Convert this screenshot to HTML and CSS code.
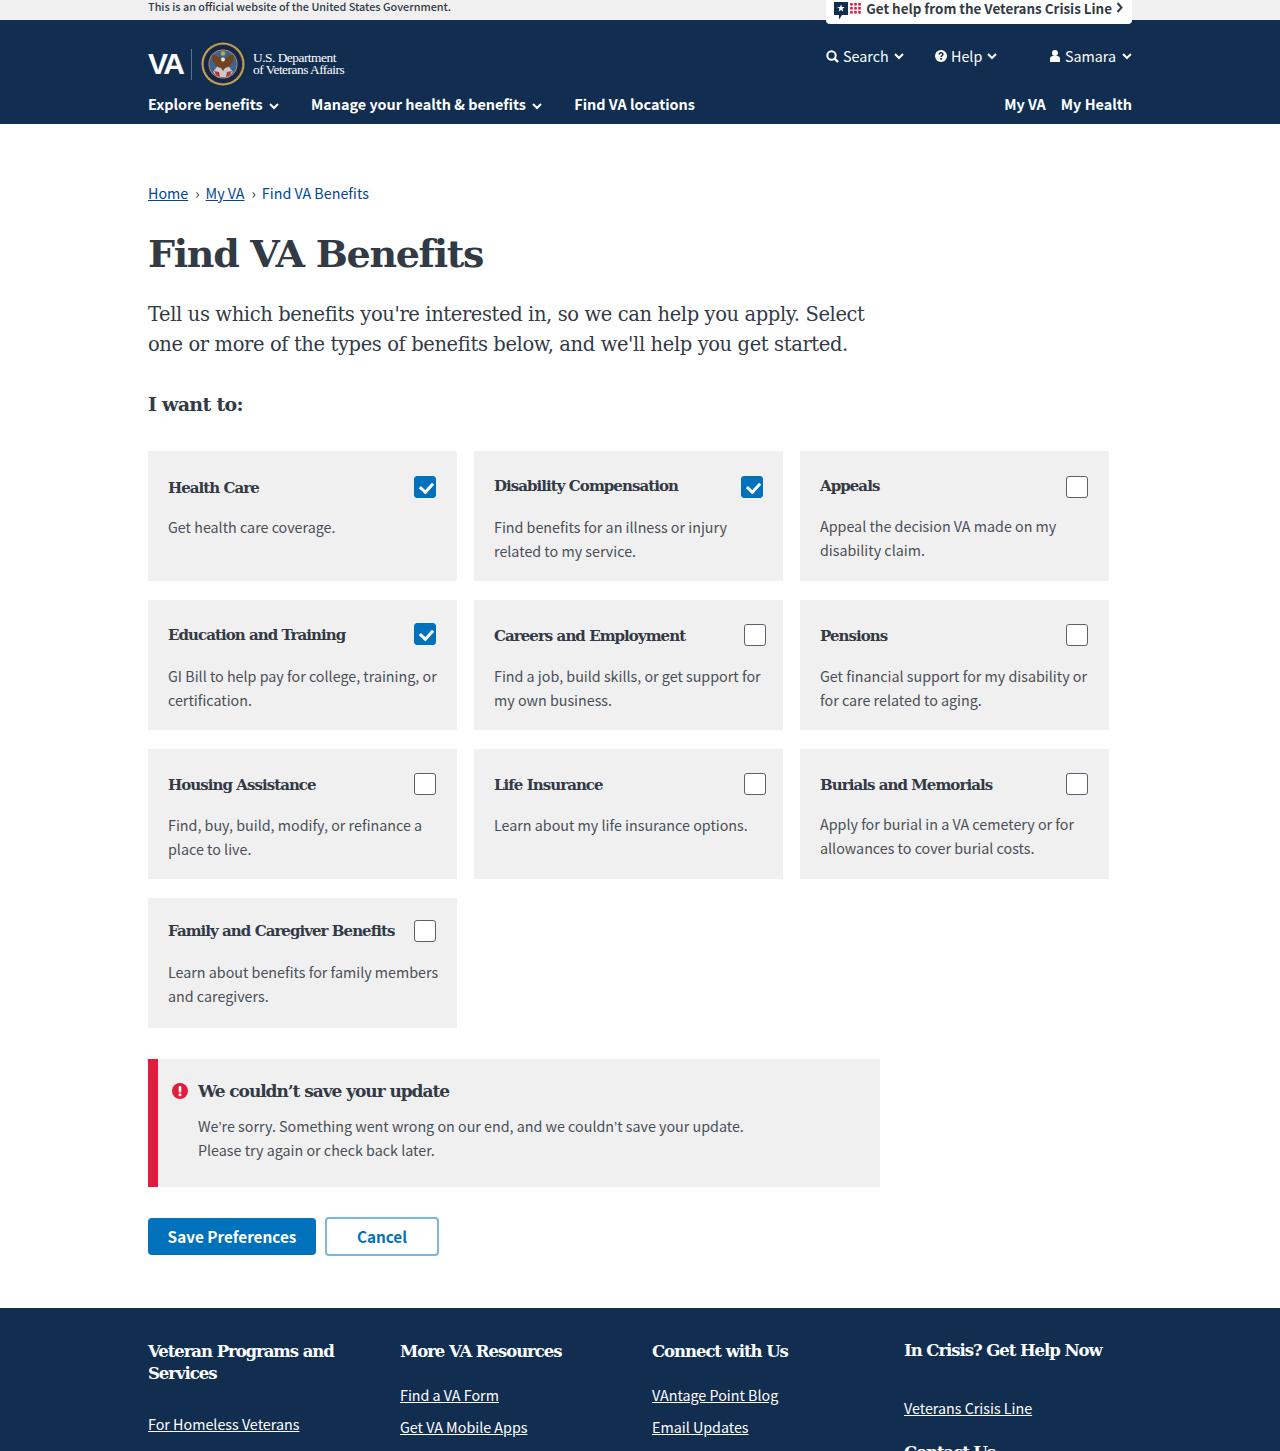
FILE: index.html
```html
<!DOCTYPE html>
<html lang="en">

<head>
  <meta charset="UTF-8">
  <title>Find VA Benefits</title>
  <link rel="stylesheet" href="styles.css">
</head>

<body>
  <div class="official-bar">
    <div class="wrap official-inner">
      <span class="official-text">This is an official website of the United States Government.</span>
      <a class="crisis-tab" href="#">
        <svg class="crisis-icon" width="29" height="21" viewBox="0 0 29 21">
          <path d="M0 2h14v13H8l-3 4.500V15H0z" fill="#112e51" />
          <path d="M7 4.500l1 2.600h2.700l-2.200 1.700.8 2.700L7 9.900l-2.300 1.600.8-2.700-2.200-1.700h2.700z" fill="#fff" />
          <g fill="#e31c3d">
            <rect x="16.200" y="3" width="2.600" height="2.600" /><rect x="20.200" y="3" width="2.600" height="2.600" /><rect x="24.200" y="3" width="2.600" height="2.600" />
            <rect x="16.200" y="7" width="2.600" height="2.600" /><rect x="20.200" y="7" width="2.600" height="2.600" /><rect x="24.200" y="7" width="2.600" height="2.600" />
            <rect x="16.200" y="11" width="2.600" height="2.600" /><rect x="20.200" y="11" width="2.600" height="2.600" /><rect x="24.200" y="11" width="2.600" height="2.600" />
          </g>
        </svg>
        Get help from the Veterans Crisis Line
        <svg class="crisis-arrow" width="7" height="11" viewBox="0 0 7 11"><path d="M1.500 1l4 4.500-4 4.500" fill="none" stroke="#323a45" stroke-width="2" /></svg>
      </a>
    </div>
  </div>

  <header class="site-header">
    <div class="wrap">
      <div class="header-top">
        <a class="logo" href="#">
          <span class="logo-va">VA</span>
          <span class="logo-rule"></span>
          <svg class="logo-seal" width="44" height="44" viewBox="0 0 44 44">
            <circle cx="22" cy="22" r="21.500" fill="#c9a24a" />
            <circle cx="22" cy="22" r="19.500" fill="#16264a" />
            <circle cx="22" cy="22" r="19.500" fill="none" stroke="#8f8a6a" stroke-width="1" stroke-dasharray="1.500 1.500" />
            <circle cx="22" cy="22" r="14.500" fill="#c9a24a" />
            <circle cx="22" cy="22" r="13.800" fill="#3d648f" />
            <path d="M12 30l6-8 4 6 4-6 6 8-5 5h-10z" fill="#c7c9cf" />
            <path d="M13 29l5 1 1 5-3-1zM31 29l-5 1-1 5 3-1z" fill="#b5303c" />
            <path d="M22 21c-2-6-6-8-11-8 0 6 3 12 9 13l2 3 2-3c6-1 9-7 9-13-5 0-9 2-11 8z" fill="#74431f" />
            <path d="M20.500 29l1.500 5 1.500-5z" fill="#d9c9a0" />
            <circle cx="22" cy="17.500" r="2" fill="#efe9d8" />
            <circle cx="22" cy="11.500" r="2.300" fill="#c9a24a" />
          </svg>
          <span class="logo-text">U.S. Department<br>of Veterans Affairs</span>
        </a>
        <div class="util-nav">
          <a class="util-item util-search" href="#">
            <svg width="13" height="13" viewBox="0 0 13 13"><circle cx="5.500" cy="5.500" r="4.200" fill="none" stroke="#fff" stroke-width="2" /><path d="M8.500 8.500l3.500 3.500" stroke="#fff" stroke-width="2.400" /></svg>
            Search
            <svg class="caret" width="10" height="7" viewBox="0 0 10 7"><path d="M1 1l4 4 4-4" fill="none" stroke="#fff" stroke-width="2" /></svg>
          </a>
          <a class="util-item util-help" href="#">
            <svg width="12" height="12" viewBox="0 0 12 12"><circle cx="6" cy="6" r="6" fill="#fff" /><path d="M4.200 4.500c0-2.300 3.700-2.300 3.700-.2 0 1.300-1.800 1.300-1.800 2.700" fill="none" stroke="#112e51" stroke-width="1.500" /><rect x="5.200" y="8" width="1.700" height="1.700" fill="#112e51" /></svg>
            Help
            <svg class="caret" width="10" height="7" viewBox="0 0 10 7"><path d="M1 1l4 4 4-4" fill="none" stroke="#fff" stroke-width="2" /></svg>
          </a>
          <a class="util-item util-user" href="#">
            <svg width="10" height="12" viewBox="0 0 10 12"><circle cx="5" cy="3" r="3" fill="#fff" /><path d="M0 12V8.500C0 7 1.500 6 2.500 6h5C8.500 6 10 7 10 8.500V12z" fill="#fff" /></svg>
            Samara
            <svg class="caret" width="10" height="7" viewBox="0 0 10 7"><path d="M1 1l4 4 4-4" fill="none" stroke="#fff" stroke-width="2" /></svg>
          </a>
        </div>
      </div>
      <nav class="main-nav">
        <a class="nav-link nav-explore" href="#">Explore benefits <svg class="caret" width="10" height="7" viewBox="0 0 10 7"><path d="M1 1l4 4 4-4" fill="none" stroke="#fff" stroke-width="2" /></svg></a>
        <a class="nav-link nav-manage" href="#">Manage your health &amp; benefits <svg class="caret" width="10" height="7" viewBox="0 0 10 7"><path d="M1 1l4 4 4-4" fill="none" stroke="#fff" stroke-width="2" /></svg></a>
        <a class="nav-link" href="#">Find VA locations</a>
        <span class="nav-spacer"></span>
        <a class="nav-link nav-myva" href="#">My VA</a>
        <a class="nav-link" href="#">My Health</a>
      </nav>
    </div>
  </header>

  <main class="wrap page">
    <div class="breadcrumbs">
      <a href="#">Home</a><span class="crumb-sep">›</span><a href="#">My VA</a><span class="crumb-sep">›</span><span class="crumb-current">Find VA Benefits</span>
    </div>

    <h1 class="page-title">Find VA Benefits</h1>
    <p class="intro">Tell us which benefits you're interested in, so we can help you apply. Select<br>one or more of the types of benefits below, and we'll help you get started.</p>
    <h2 class="want-title">I want to:</h2>

    <div class="benefits">
      <div class="card">
        <div class="card-head"><h3 class="title-down">Health Care</h3><span class="box checked"></span></div>
        <p>Get health care coverage.</p>
      </div>
      <div class="card">
        <div class="card-head"><h3 class="title-up">Disability Compensation</h3><span class="box checked box-tight"></span></div>
        <p>Find benefits for an illness or injury related to my service.</p>
      </div>
      <div class="card card-tight">
        <div class="card-head"><h3 class="title-up">Appeals</h3><span class="box"></span></div>
        <p>Appeal the decision VA made on my disability claim.</p>
      </div>
      <div class="card card-edu">
        <div class="card-head"><h3>Education and Training</h3><span class="box checked box-up"></span></div>
        <p>GI Bill to help pay for college, training, or certification.</p>
      </div>
      <div class="card">
        <div class="card-head"><h3>Careers and Employment</h3><span class="box box-out box-up"></span></div>
        <p>Find a job, build skills, or get support for my own business.</p>
      </div>
      <div class="card">
        <div class="card-head"><h3>Pensions</h3><span class="box box-up"></span></div>
        <p>Get financial support for my disability or for care related to aging.</p>
      </div>
      <div class="card">
        <div class="card-head"><h3>Housing Assistance</h3><span class="box box-up"></span></div>
        <p>Find, buy, build, modify, or refinance a place to live.</p>
      </div>
      <div class="card">
        <div class="card-head"><h3>Life Insurance</h3><span class="box box-out box-up"></span></div>
        <p>Learn about my life insurance options.</p>
      </div>
      <div class="card card-tight">
        <div class="card-head"><h3>Burials and Memorials</h3><span class="box box-up"></span></div>
        <p>Apply for burial in a VA cemetery or for allowances to cover burial costs.</p>
      </div>
      <div class="card card-family">
        <div class="card-head"><h3>Family and Caregiver Benefits</h3><span class="box"></span></div>
        <p>Learn about benefits for family members and caregivers.</p>
      </div>
    </div>

    <div class="alert">
      <svg class="alert-icon" width="16" height="16" viewBox="0 0 16 16"><circle cx="8" cy="8" r="8" fill="#e31c3d" /><rect x="6.700" y="3" width="2.600" height="6.500" rx="1" fill="#fff" /><circle cx="8" cy="11.800" r="1.500" fill="#fff" /></svg>
      <div>
        <h3>We couldn’t save your update</h3>
        <p>We<span class="apos">’</span>re sorry. Something went wrong on our end, and we couldn<span class="apos">’</span>t save your update.<br>Please try again or check back later.</p>
      </div>
    </div>

    <div class="actions">
      <a class="btn btn-primary" href="#">Save Preferences</a>
      <a class="btn btn-outline" href="#">Cancel</a>
    </div>
  </main>

  <footer class="site-footer">
    <div class="wrap footer-cols">
      <div class="footer-col">
        <h4 class="footer-two-line">Veteran Programs and Services</h4>
        <a href="#">For Homeless Veterans</a>
      </div>
      <div class="footer-col">
        <h4>More VA Resources</h4>
        <a href="#">Find a VA Form</a>
        <a href="#">Get VA Mobile Apps</a>
      </div>
      <div class="footer-col">
        <h4>Connect with Us</h4>
        <a href="#">VAntage Point Blog</a>
        <a href="#">Email Updates</a>
      </div>
      <div class="footer-col footer-crisis">
        <h4>In Crisis? Get Help Now</h4>
        <a href="#">Veterans Crisis Line</a>
        <h4 class="footer-contact">Contact Us</h4>
      </div>
    </div>
  </footer>
</body>

</html>
```

FILE: styles.css
```css
* {
  box-sizing: border-box;
}

html,
body {
  height: 1451px;
  overflow: hidden;
}

body {
  margin: 0;
  font-family: "Noto Sans CJK SC", sans-serif;
  font-size: 14.300px;
  color: #323a45;
  background-color: #fff;
}

a {
  text-decoration: none;
}

.wrap {
  width: 984px;
  margin: 0 auto;
}

/* top bar */
.official-bar {
  height: 20px;
  background-color: #f0f0f0;
}

.official-inner {
  display: flex;
  justify-content: space-between;
}

.official-text {
  font-size: 10.850px;
  font-weight: 500;
  line-height: 12px;
}

.crisis-tab {
  display: flex;
  align-items: center;
  height: 24px;
  padding: 0 9px 9px 8px;
  position: relative;
  z-index: 1;
  border-radius: 0 0 4px 4px;
  font-size: 13.400px;
  font-weight: 700;
  color: #323a45;
  background-color: #fff;
}

.crisis-icon {
  margin-right: 3px;
  align-self: flex-start;
}

.crisis-arrow {
  margin-left: 4px;
}

/* header */
.site-header {
  height: 104px;
  color: #fff;
  background-color: #112e51;
}

.site-header a {
  color: #fff;
}

.header-top {
  display: flex;
  justify-content: space-between;
  height: 69px;
}

.logo {
  display: flex;
  align-items: center;
  height: 44px;
  margin-top: 22px;
}

.logo-va {
  width: 35px;
  font-family: "Liberation Sans", sans-serif;
  font-size: 30px;
  font-weight: 700;
  letter-spacing: -2.500px;
}

.logo-rule {
  width: 1px;
  height: 31px;
  margin: 0 9px 0 8px;
  background-color: #5d7186;
}

.logo-text {
  margin-left: 8px;
  font-family: "Liberation Serif", serif;
  font-size: 13.400px;
  line-height: 12px;
  letter-spacing: -.5px;
}

.util-nav {
  display: flex;
  padding-top: 24px;
}

.util-item {
  display: flex;
  align-items: center;
  height: 24px;
  gap: 4px;
  line-height: 24px;
}

.util-search {
  width: 109px;
}

.util-help {
  width: 115px;
}

.util-user {
  width: 82px;
  gap: 5px;
}

.util-item .caret {
  margin-left: 1px;
}

.main-nav {
  display: flex;
  height: 30px;
  align-items: center;
}

.nav-link {
  font-size: 14.400px;
  font-weight: 700;
  line-height: 30px;
}

.nav-link .caret {
  margin-left: 3px;
}

.nav-explore {
  margin-right: 32px;
}

.nav-manage {
  margin-right: 32px;
}

.nav-spacer {
  flex: 1;
}

.nav-myva {
  margin-right: 15px;
}

/* page */
.page {
  padding-top: 57px;
}

.breadcrumbs {
  height: 24px;
  line-height: 24px;
  color: #004795;
}

.breadcrumbs a {
  color: #004795;
  text-decoration: underline;
}

.crumb-sep {
  margin: 0 6px 0 7px;
  color: #323a45;
}

.page-title {
  margin: 26px 0 0;
  font-family: "DejaVu Serif", serif;
  font-size: 38px;
  font-weight: 700;
  line-height: 46px;
  letter-spacing: -1.300px;
}

.intro {
  margin: 23px 0 0;
  font-family: "DejaVu Serif", serif;
  font-size: 19.500px;
  line-height: 30px;
  letter-spacing: -.390px;
}

.want-title {
  margin: 29px 0 0;
  font-family: "DejaVu Serif", serif;
  font-size: 19px;
  font-weight: 700;
  line-height: 30px;
  letter-spacing: -.7px;
}

.benefits {
  display: grid;
  grid-template-columns: repeat(3, 309px);
  grid-auto-rows: 130px;
  gap: 19px 17px;
  margin-top: 32px;
}

.card {
  padding: 20px 20px 0;
  background-color: #f0f0f0;
}

.card-head {
  display: flex;
  justify-content: space-between;
  align-items: center;
  height: 32px;
}

.card-head h3 {
  margin: 0;
  font-family: "DejaVu Serif", serif;
  font-size: 15px;
  font-weight: 700;
  line-height: 24px;
  letter-spacing: -.95px;
}

.card-head .title-up {
  margin-bottom: 2px;
}

.card-head .title-down {
  margin-top: 2px;
}

.card p {
  margin: 12px -4px 0 0;
  line-height: 24px;
  color: #494f57;
}

.card-tight p {
  margin-top: 11px;
}

.card-edu {
  padding-top: 19px;
}

.card-edu p {
  margin-top: 13px;
}

.card-family {
  padding-top: 17px;
}

.card-family p {
  margin-top: 13px;
}

.box {
  position: relative;
  flex: none;
  width: 22px;
  height: 22px;
  margin-right: 1px;
  border: 1px solid #5b616b;
  border-radius: 3px;
  background-color: #fff;
}

.box-tight {
  margin-right: 0;
}

.box-out {
  margin-right: -3px;
}

.box-up {
  margin-bottom: 2px;
}

.box.checked {
  border-color: #0071bb;
  background-color: #0071bb;
}

/* tick drawn with two borders */
.box.checked::after {
  content: "";
  position: absolute;
  top: 3px;
  left: 7px;
  width: 6px;
  height: 10px;
  border-right: 3px solid #fff;
  border-bottom: 3px solid #fff;
  transform: rotate(42deg);
}

.alert {
  display: flex;
  width: 732px;
  height: 128px;
  margin-top: 31px;
  padding: 20px 0 0 14px;
  border-left: 10px solid #e31c3d;
  background-color: #f0f0f0;
}

.alert-icon {
  flex: none;
  margin: 4px 10px 0 0;
}

.alert h3 {
  margin: 0;
  font-family: "DejaVu Serif", serif;
  font-size: 17px;
  font-weight: 700;
  line-height: 24px;
  letter-spacing: -1.050px;
}

.alert p {
  margin: 11px 0 0;
  line-height: 24px;
  color: #494f57;
}

/* the CJK font has a full-width curly quote */
.apos {
  font-family: "Liberation Sans", sans-serif;
  font-size: 14px;
  line-height: 0;
}

.actions {
  display: flex;
  gap: 9px;
  margin-top: 31px;
}

.btn {
  display: block;
  height: 37px;
  border-radius: 4px;
  font-size: 15.300px;
  font-weight: 700;
  line-height: 37px;
  text-align: center;
}

.btn-primary {
  width: 168px;
  color: #fff;
  background-color: #0071bb;
}

.btn-outline {
  width: 114px;
  height: 39px;
  margin-top: -1px;
  border: 2px solid #7db6dc;
  line-height: 35px;
  color: #0071bb;
  background-color: #fff;
}

/* footer */
.site-footer {
  margin-top: 52px;
  height: 143px;
  padding-top: 33px;
  color: #fff;
  background-color: #112e51;
}

.footer-cols {
  display: grid;
  grid-template-columns: repeat(4, 252px);
}

.footer-col a {
  display: block;
  width: fit-content;
  margin-bottom: 8px;
  line-height: 24px;
  color: #fff;
  text-decoration: underline;
}

.footer-col h4 {
  margin: 0 0 20px;
  width: 220px;
  font-family: "DejaVu Serif", serif;
  font-size: 16.500px;
  font-weight: 700;
  line-height: 22px;
  letter-spacing: -1.050px;
}

.footer-col .footer-two-line {
  margin-bottom: 27px;
}

.footer-crisis h4 {
  margin-top: -1px;
  margin-bottom: 34px;
}

.footer-col .footer-contact {
  margin-top: 22px;
}
```
